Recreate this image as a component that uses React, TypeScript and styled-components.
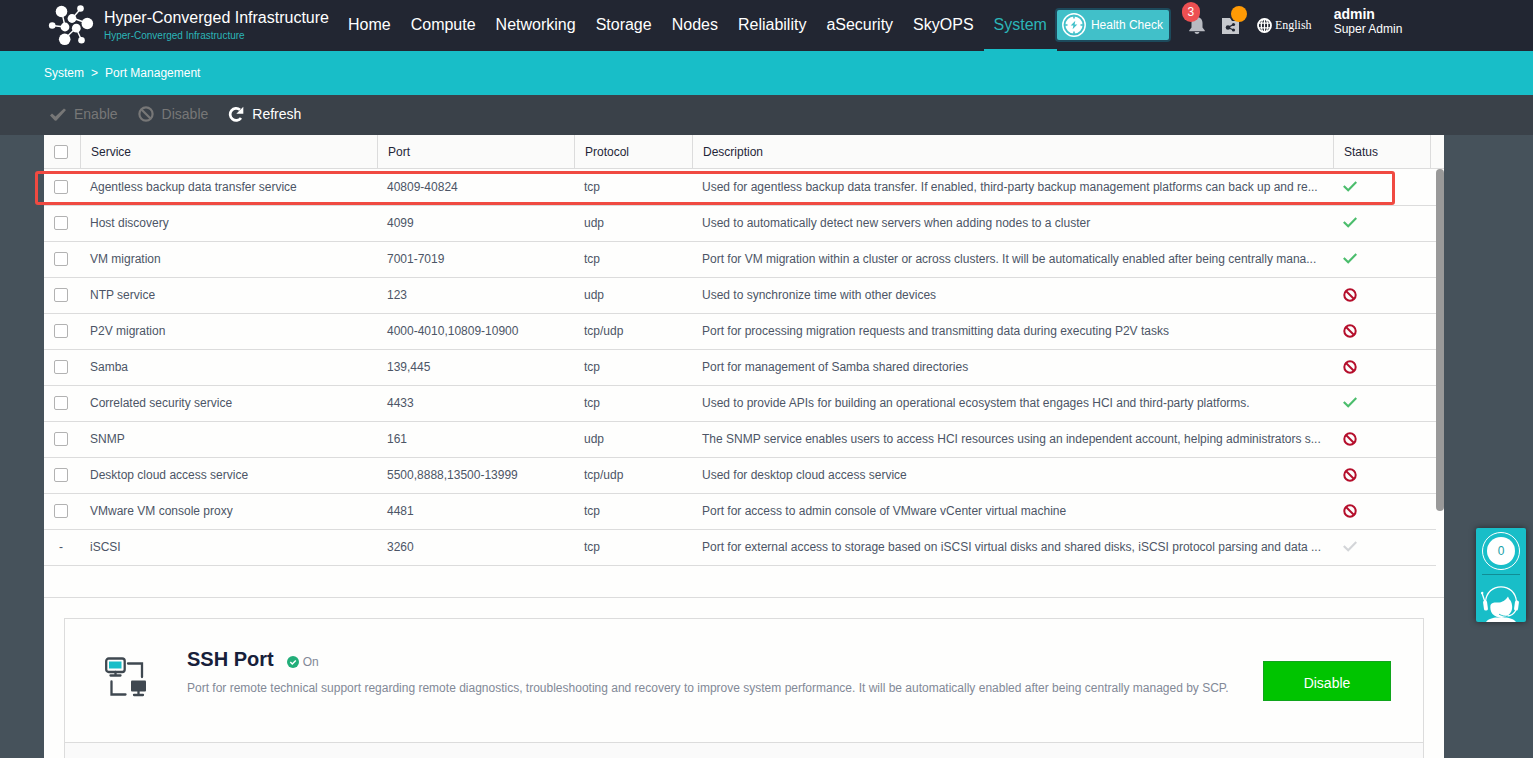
import React from "react";
import styled, { createGlobalStyle, css } from "styled-components";

const GlobalStyle = createGlobalStyle`
  *, *::before, *::after { box-sizing: border-box; }
  body {
    margin: 0;
    background: #46525b;
    font-family: Arial, "Liberation Sans", sans-serif;
    font-size: 12px;
    line-height: 16px;
    color: #4c5566;
  }
  button { font-family: inherit; border: 0; padding: 0; background: none; cursor: pointer; }
  a { color: inherit; text-decoration: none; }
  svg { display: block; flex: none; }
`;

const Page = styled.div`
  display: flex;
  flex-direction: column;
  min-height: 100vh;
`;

/* ---------- top bar ---------- */

const TopBar = styled.header`
  display: flex;
  align-items: center;
  height: 51px;
  padding-left: 48px;
  background: #222632;
  color: #fff;
  white-space: nowrap;
`;

const Brand = styled.a`
  display: flex;
  align-items: center;
  gap: 10px;
  margin-right: 9px;
`;

const BrandText = styled.span`
  display: flex;
  flex-direction: column;
`;

const BrandTitle = styled.span`
  font-size: 16px;
  line-height: 20px;
`;

const BrandSub = styled.span`
  font-size: 10px;
  line-height: 16px;
  color: #2bb5b8;
`;

const Nav = styled.nav`
  display: flex;
  align-self: stretch;
`;

const NavLink = styled.a<{ $active?: boolean }>`
  display: flex;
  align-items: center;
  padding: 0 10px;
  font-size: 16px;
  border-bottom: 2px solid transparent;
  ${(p) =>
    p.$active &&
    css`
      color: #2bb5b8;
      border-color: #18bec8;
    `}
`;

const HealthButton = styled.button`
  display: flex;
  align-items: center;
  gap: 5px;
  height: 34px;
  margin: 0 -1px 2px -2px;
  padding: 0 6px 0 5px;
  && { border: 2px solid #1d4a5c; }
  border-radius: 4px;
  background: #41c0c9;
  color: #fff;
  font-size: 12px;
`;

const IconButton = styled.button<{ $space: number }>`
  position: relative;
  display: flex;
  margin-left: ${(p) => p.$space}px;
`;

const Badge = styled.span`
  position: absolute;
  left: -7px;
  top: -15px;
  width: 18px;
  height: 20px;
  border-radius: 9px;
  background: #ed5052;
  color: #fff;
  font-size: 12px;
  line-height: 20px;
  text-align: center;
`;

const Dot = styled.span`
  position: absolute;
  left: 9px;
  top: -12px;
  width: 16px;
  height: 16px;
  border-radius: 50%;
  background: #ff9a05;
`;

const Language = styled.button`
  display: flex;
  align-items: center;
  gap: 3px;
  margin-left: 18px;
  color: #fff;
  && { font-family: "Liberation Serif", "Times New Roman", serif; }
  font-size: 12px;
`;

const Account = styled.div`
  display: flex;
  flex-direction: column;
  margin-left: 22px;
  padding-bottom: 7px;
  line-height: 15px;
`;

const AccountName = styled.strong`
  font-size: 14px;
`;

/* ---------- breadcrumb and tool bar ---------- */

const Breadcrumb = styled.nav`
  display: flex;
  align-items: center;
  gap: 7px;
  height: 44px;
  padding-left: 44px;
  background: #18bec8;
  color: #fff;
`;

const Toolbar = styled.div`
  display: flex;
  align-items: center;
  gap: 20px;
  height: 40px;
  padding: 0 50px 2px;
  background: #3a4149;
`;

const Tool = styled.button`
  display: flex;
  align-items: center;
  gap: 8px;
  color: #fff;
  font-size: 14px;
  &:disabled { color: #777777; cursor: default; }
`;

/* ---------- port table ---------- */

const Content = styled.main`
  display: flex;
  flex-direction: column;
  flex: 1;
  margin: 0 89px 0 44px;
  background: #fefefd;
`;

const TablePanel = styled.section`
  position: relative;
  display: flex;
  padding-bottom: 31px;
  border-bottom: 1px solid #dcdcdc;
`;

const Table = styled.table`
  flex: 1;
  width: 0;
  table-layout: fixed;
  border-collapse: separate;
  border-spacing: 0;
  tbody tr:first-child td { height: 37px; }
`;

const Th = styled.th<{ $width?: number }>`
  ${(p) => p.$width && `width: ${p.$width}px;`}
  height: 34px;
  padding: 0 10px;
  border-right: 1px solid #dcdcdc;
  border-bottom: 1px solid #dcdcdc;
  background: #fbfbfa;
  color: #1f2638;
  font-weight: 400;
  text-align: left;
  &:last-child { border-right: 0; padding: 0; }
`;

const Td = styled.td`
  height: 36px;
  padding: 0 9px 1px;
  border-bottom: 1px solid #dcdcdc;
  overflow: hidden;
  white-space: nowrap;
  text-overflow: ellipsis;
  &:first-child { padding-left: 10px; }
`;

const Check = styled.input.attrs({ type: "checkbox" })`
  appearance: none;
  display: block;
  width: 14px;
  height: 14px;
  margin: 0;
  border: 1px solid #b2b2b2;
  border-radius: 2px;
  background: #fff;
  &:checked { background: #18bec8; }
`;

const NoCheck = styled.span`
  display: block;
  width: 14px;
  text-align: center;
`;

const Gutter = styled.div`
  width: 8px;
`;

const GutterHead = styled.div`
  height: 34px;
  border-bottom: 1px solid #dcdcdc;
  background: #fbfbfa;
`;

const Thumb = styled.div`
  height: 342px;
  border-radius: 4px;
  background: #999;
`;

const Highlight = styled.div`
  position: absolute;
  left: -9px;
  right: 49px;
  top: 36px;
  height: 34px;
  border: 3px solid #f04a41;
  border-radius: 3px;
  pointer-events: none;
`;

/* ---------- SSH card ---------- */

const Card = styled.section`
  display: flex;
  flex-direction: column;
  flex: 1;
  margin: 20px 20px 0;
  border: 1px solid #dcdcdc;
  border-bottom: 0;
`;

const CardBody = styled.div`
  display: flex;
  align-items: center;
  height: 124px;
  padding: 0 32px 6px 40px;
  border-bottom: 1px solid #dcdcdc;
`;

const CardFoot = styled.div`
  flex: 1;
  background: #fafafa;
`;

const CardText = styled.div`
  flex: 1;
  margin-left: 40px;
  padding-bottom: 12px;
`;

const CardTitle = styled.div`
  display: flex;
  align-items: center;
  margin-bottom: 9px;
`;

const Heading = styled.h2`
  margin: 0 13px 0 0;
  color: #17203a;
  font-size: 20px;
  line-height: 24px;
`;

const State = styled.span`
  display: flex;
  align-items: center;
  gap: 4px;
  padding-top: 5px;
  color: #828997;
`;

const Note = styled.p`
  margin: 0;
  color: #828997;
`;

const GreenButton = styled.button`
  && { border: 1px solid #10a51c; }
  width: 128px;
  height: 40px;
  margin-top: 6px;
  padding-top: 4px;
  background: #00c400;
  color: #fff;
  font-size: 14px;
`;

/* ---------- floating helper ---------- */

const Helper = styled.aside`
  position: fixed;
  right: 7px;
  bottom: 136px;
  display: flex;
  flex-direction: column;
  align-items: center;
  width: 50px;
  height: 94px;
  padding-top: 4px;
  border-radius: 2px;
  background: #18bec8;
  box-shadow: 0 0 6px rgba(0, 0, 0, 0.5);
`;

const Counter = styled.button`
  && { border: 1px solid #fff; }
  width: 38px;
  height: 38px;
  padding: 4px;
  border-radius: 50%;
`;

const CounterValue = styled.span`
  display: block;
  border-radius: 50%;
  background: #fff;
  color: #18a0a8;
  font-size: 12px;
  line-height: 28px;
`;

const HelperLine = styled.hr`
  width: 38px;
  margin: 4px 0 11px;
  border: 0;
  border-top: 1px solid #118d95;
`;

/* ---------- drawings ---------- */

const Logo = () => (
  <svg width="46" height="44" viewBox="0 0 46 44" fill="#fff" stroke="#fff" strokeWidth="1.4" aria-hidden="true">
    <path d="M13.5 7 17 22M4 21.500 17 23M33 4.500 24.500 14M24.500 14 40 19.500M28 24 33.500 36M28 24 16.500 35" fill="none" />
    <g stroke="none">
      <circle cx="13.500" cy="7.500" r="5.800" />
      <circle cx="32.500" cy="4.500" r="3.300" />
      <circle cx="24" cy="14.500" r="4.400" />
      <circle cx="39.300" cy="19.500" r="5.800" />
      <circle cx="4.200" cy="21.500" r="3.300" />
      <circle cx="17" cy="23" r="4.400" />
      <circle cx="28.300" cy="24.200" r="4.400" />
      <circle cx="16.700" cy="35.300" r="5.800" />
      <circle cx="33.500" cy="36.200" r="3.300" />
    </g>
  </svg>
);

const HealthIcon = () => (
  <svg width="24" height="24" viewBox="0 0 24 24" aria-hidden="true">
    <circle cx="12" cy="12" r="11.200" fill="none" stroke="#fff" strokeWidth="1.500" />
    <circle cx="12" cy="12" r="8.600" fill="#fff" />
    <path d="M12 3v2.500M12 18.500V21M3 12h2.500M18.500 12H21" stroke="#41c0c9" strokeWidth="1.600" />
    <path d="M13.300 7.800 8.700 12.600h2.700l-.8 3.700 4.700-4.900h-2.700z" fill="#41c0c9" />
  </svg>
);

const Bell = () => (
  <svg width="16" height="17" viewBox="0 0 16 17" fill="#b9bbc2" aria-hidden="true">
    <path d="M8 0c3.500.3 5.500 2.600 5.500 6v4.500l2.300 3v.8H.2v-.8l2.300-3V6C2.500 2.600 4.500.3 8 0zM5.500 15h5c-.4 1.200-1.300 2-2.500 2s-2.100-.8-2.500-2z" />
  </svg>
);

const ShareFolder = () => (
  <svg width="17" height="16" viewBox="0 0 17 16" aria-hidden="true">
    <path d="M0 0h8l2 3h7v13H0z" fill="#c6c8cd" />
    <path d="M11.500 6.500 6 9.500l5.500 2.500" fill="none" stroke="#222632" strokeWidth="1.300" />
    <circle cx="6" cy="9.500" r="2.300" fill="#222632" />
    <circle cx="11.500" cy="6.500" r="1.600" fill="#222632" />
    <circle cx="11.500" cy="12" r="1.600" fill="#222632" />
  </svg>
);

const Globe = () => (
  <svg width="15" height="15" viewBox="0 0 15 15" fill="none" stroke="#fff" strokeWidth="1.800" aria-hidden="true">
    <circle cx="7.500" cy="7.500" r="6.500" />
    <ellipse cx="7.500" cy="7.500" rx="3.200" ry="6.400" strokeWidth="1.300" />
    <path d="M1 5.200h13M1 9.800h13M7.500 1v13" strokeWidth="1.200" />
  </svg>
);

const ToolTick = () => (
  <svg width="16" height="16" viewBox="0 0 16 16" aria-hidden="true">
    <path d="M0 9.500 2 7.500l3.500 3L14 2.500 16 4 6.500 14.500 5 14.800z" fill="currentColor" />
  </svg>
);

const Ban = ({ size, width }: { size: number; width: number }) => (
  <svg width={size} height={size} viewBox="0 0 16 16" fill="none" stroke="currentColor" strokeWidth={width} aria-hidden="true">
    <circle cx="8" cy="8" r="6.600" />
    <path d="m3.500 3.500 9 9" />
  </svg>
);

const Reload = () => (
  <svg width="16" height="16" viewBox="0 0 16 16" aria-hidden="true">
    <path d="M13 12A6 6 0 1 1 12 3.800" fill="none" stroke="currentColor" strokeWidth="2.700" />
    <path d="M15.300.8v7H8.300z" fill="currentColor" />
  </svg>
);

const StatusIcon = ({ kind }: { kind: Status }) =>
  kind === "off" ? (
    <svg width="14" height="14" viewBox="0 0 14 14" fill="none" stroke="#b50f2c" strokeWidth="2" role="img" aria-label="Disabled">
      <circle cx="7" cy="7" r="5.700" />
      <path d="m3 3 8 8" />
    </svg>
  ) : (
    <svg width="14" height="14" viewBox="0 0 14 14" fill="none" stroke={kind === "on" ? "#4bbd6c" : "#d3d5d8"} strokeWidth="2.200" role="img" aria-label="Enabled">
      <path d="m.8 6 4.400 4.300L13.300 2" />
    </svg>
  );

const Computers = () => (
  <svg width="42" height="42" viewBox="0 0 42 42" fill="none" stroke="#3f4850" strokeWidth="2.300" strokeLinecap="round" aria-hidden="true">
    <rect x="1.200" y="1.500" width="18.500" height="13.500" rx="2.500" />
    <rect x="4" y="4.500" width="12.500" height="7" fill="#18bec8" stroke="none" />
    <path d="M10.500 15v3M5.500 18.500h10M23 6.500h14V20M6.500 24.500v13h14M33.500 34v4M29 38h9" />
    <rect x="26" y="23.500" width="15" height="11" rx="1" fill="#3f4850" stroke="none" />
  </svg>
);

const OnBadge = () => (
  <svg width="12" height="12" viewBox="0 0 12 12" aria-hidden="true">
    <circle cx="6" cy="6" r="6" fill="#22ae79" />
    <path d="m3.300 6 2 2 3.500-3.600" fill="none" stroke="#fff" strokeWidth="1.400" />
  </svg>
);

const Headset = () => (
  <svg width="40" height="36" viewBox="0 0 40 36" fill="none" stroke="#fff" aria-hidden="true">
    <path d="M4.500 16C5 6.500 12 .8 20 .8S35 6.500 35.500 16M1 7l3 9" strokeWidth="1.300" />
    <circle cx="1.200" cy="7" r="1.200" fill="#fff" stroke="none" />
    <path d="M9.500 19c1-2 3-2.500 6-2.500 5 .5 9-2 11.500-6 1 3 2 3 3 5 2 5 1.500 9.500-1.500 12.500-2 2.500-5 3.500-8 3.500s-7-1-9-3.500-2.500-6-2-9zM5 36c2-3 7-4.500 11-4.500h8c4 0 9 1.500 11 4.500z" fill="#fff" stroke="none" />
    <rect x="2.500" y="14.500" width="4" height="10" rx="1.800" transform="rotate(-8 4.500 19.500)" fill="#fff" stroke="none" />
    <rect x="33.500" y="14.500" width="4" height="10" rx="1.800" transform="rotate(8 35.500 19.500)" fill="#fff" stroke="none" />
    <path d="M35 24c-2 4-5 6-9 6" strokeWidth="1.300" />
    <path d="M27 30.200c-3.500.3-6-.4-9-2" stroke="#18bec8" strokeWidth="0.900" />
  </svg>
);

/* ---------- data ---------- */

type Status = "on" | "off" | "idle";

interface PortRow {
  service: string;
  port: string;
  protocol: string;
  description: string;
  status: Status;
}

const navItems = ["Home", "Compute", "Networking", "Storage", "Nodes", "Reliability", "aSecurity", "SkyOPS", "System"];

const rows: PortRow[] = [
  { service: "Agentless backup data transfer service", port: "40809-40824", protocol: "tcp", description: "Used for agentless backup data transfer. If enabled, third-party backup management platforms can back up and re...", status: "on" },
  { service: "Host discovery", port: "4099", protocol: "udp", description: "Used to automatically detect new servers when adding nodes to a cluster", status: "on" },
  { service: "VM migration", port: "7001-7019", protocol: "tcp", description: "Port for VM migration within a cluster or across clusters. It will be automatically enabled after being centrally mana...", status: "on" },
  { service: "NTP service", port: "123", protocol: "udp", description: "Used to synchronize time with other devices", status: "off" },
  { service: "P2V migration", port: "4000-4010,10809-10900", protocol: "tcp/udp", description: "Port for processing migration requests and transmitting data during executing P2V tasks", status: "off" },
  { service: "Samba", port: "139,445", protocol: "tcp", description: "Port for management of Samba shared directories", status: "off" },
  { service: "Correlated security service", port: "4433", protocol: "tcp", description: "Used to provide APIs for building an operational ecosystem that engages HCI and third-party platforms.", status: "on" },
  { service: "SNMP", port: "161", protocol: "udp", description: "The SNMP service enables users to access HCI resources using an independent account, helping administrators s...", status: "off" },
  { service: "Desktop cloud access service", port: "5500,8888,13500-13999", protocol: "tcp/udp", description: "Used for desktop cloud access service", status: "off" },
  { service: "VMware VM console proxy", port: "4481", protocol: "tcp", description: "Port for access to admin console of VMware vCenter virtual machine", status: "off" },
  { service: "iSCSI", port: "3260", protocol: "tcp", description: "Port for external access to storage based on iSCSI virtual disks and shared disks, iSCSI protocol parsing and data ...", status: "idle" },
];

export default function App() {
  return (
    <Page>
      <GlobalStyle />
      <TopBar>
        <Brand href="#">
          <Logo />
          <BrandText>
            <BrandTitle>Hyper-Converged Infrastructure</BrandTitle>
            <BrandSub>Hyper-Converged Infrastructure</BrandSub>
          </BrandText>
        </Brand>
        <Nav>
          {navItems.map((item) => (
            <NavLink key={item} href="#" $active={item === "System"}>
              {item}
            </NavLink>
          ))}
        </Nav>
        <HealthButton>
          <HealthIcon />
          Health Check
        </HealthButton>
        <IconButton $space={19} aria-label="Alerts">
          <Bell />
          <Badge>3</Badge>
        </IconButton>
        <IconButton $space={17} aria-label="Tasks">
          <ShareFolder />
          <Dot />
        </IconButton>
        <Language>
          <Globe />
          English
        </Language>
        <Account>
          <AccountName>admin</AccountName>
          <span>Super Admin</span>
        </Account>
      </TopBar>

      <Breadcrumb>
        <a href="#">System</a>
        <span>&gt;</span>
        <a href="#">Port Management</a>
      </Breadcrumb>

      <Toolbar>
        <Tool disabled>
          <ToolTick />
          Enable
        </Tool>
        <Tool disabled>
          <Ban size={16} width={2.2} />
          Disable
        </Tool>
        <Tool>
          <Reload />
          Refresh
        </Tool>
      </Toolbar>

      <Content>
        <TablePanel>
          <Table>
            <thead>
              <tr>
                <Th $width={37}>
                  <Check aria-label="Select all" />
                </Th>
                <Th $width={297}>Service</Th>
                <Th $width={197}>Port</Th>
                <Th $width={118}>Protocol</Th>
                <Th>Description</Th>
                <Th $width={97}>Status</Th>
                <Th $width={5} />
              </tr>
            </thead>
            <tbody>
              {rows.map((row) => (
                <tr key={row.service}>
                  <Td>
                    {row.status === "idle" ? <NoCheck>-</NoCheck> : <Check aria-label={row.service} />}
                  </Td>
                  <Td>{row.service}</Td>
                  <Td>{row.port}</Td>
                  <Td>{row.protocol}</Td>
                  <Td>{row.description}</Td>
                  <Td colSpan={2}>
                    <StatusIcon kind={row.status} />
                  </Td>
                </tr>
              ))}
            </tbody>
          </Table>
          <Gutter>
            <GutterHead />
            <Thumb />
          </Gutter>
          <Highlight />
        </TablePanel>

        <Card>
          <CardBody>
            <Computers />
            <CardText>
              <CardTitle>
                <Heading>SSH Port</Heading>
                <State>
                  <OnBadge />
                  On
                </State>
              </CardTitle>
              <Note>
                Port for remote technical support regarding remote diagnostics, troubleshooting and recovery to improve
                system performance. It will be automatically enabled after being centrally managed by SCP.
              </Note>
            </CardText>
            <GreenButton>Disable</GreenButton>
          </CardBody>
          <CardFoot />
        </Card>
      </Content>

      <Helper>
        <Counter aria-label="Open chats">
          <CounterValue>0</CounterValue>
        </Counter>
        <HelperLine />
        <Headset />
      </Helper>
    </Page>
  );
}
